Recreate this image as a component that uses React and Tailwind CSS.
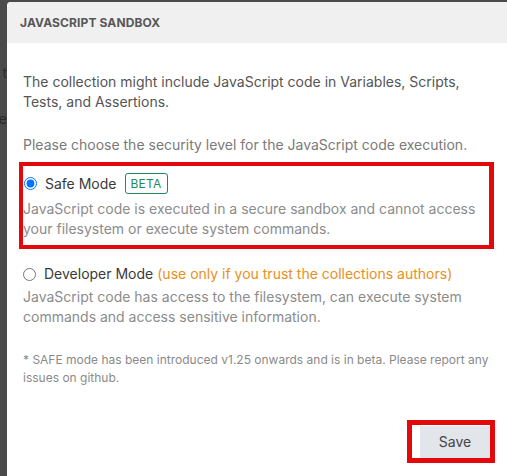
import { useState } from "react";

const FONT = { fontFamily: "Inter, 'Noto Sans', sans-serif" };

export default function App() {
  const [mode, setMode] = useState("safe");

  return (
    <div className="w-[507px] h-[476px] overflow-hidden bg-[#4a4a4a] flex" style={FONT}>
      {/* app behind the overlay, mostly hidden */}
      <div className="w-[7px] shrink-0 overflow-hidden relative text-[14px] text-[#2a2a2a]">
        <span className="absolute top-[62px] right-0">t</span>
        <span className="absolute top-[108px] right-0">e</span>
      </div>

      {/* Modal */}
      <div className="mt-[2px] w-[520px] shrink-0 bg-white rounded-tl-[4px] overflow-hidden">
        <div className="h-[41px] bg-[#f0f0f0] px-[13px] flex items-center">
          <h2 className="text-[12px] font-bold tracking-[0.01em] text-[#575757] uppercase">
            JavaScript Sandbox
          </h2>
        </div>

        <div className="px-[16px] pt-[29px] text-[14px] leading-[20px]">
          <p className="text-[#555] w-[450px]">
            The collection might include JavaScript code in Variables, Scripts, Tests, and Assertions.
          </p>
          <p className="text-[#7a7a7a] mt-[23px]">
            Please choose the security level for the JavaScript code execution.
          </p>

          {/* Safe mode (highlighted) */}
          <div className="-ml-[4px] mt-[7px] w-[475px] border-[4px] border-r-[5px] border-[#e3080c] pt-[7px] pb-[6px]">
            <label className="flex items-center h-[21px] cursor-pointer">
              <input
                type="radio"
                name="mode"
                checked={mode === "safe"}
                onChange={() => setMode("safe")}
                className="m-0 ml-[1px] w-[13px] h-[13px]"
              />
              <span className="ml-[8px] text-[#3a3a3a]">Safe Mode</span>
              <span className="ml-[8px] h-[21px] px-[5px] flex items-center border border-[#1f8a5c] rounded-[3px] text-[12px] text-[#1f8a5c] tracking-[0.02em]">
                BETA
              </span>
            </label>
            <p className="mt-[5px] text-[#8c8c8c]">
              JavaScript code is executed in a secure sandbox and cannot access your filesystem or execute system commands.
            </p>
          </div>

          {/* Developer mode */}
          <div className="mt-[15px]">
            <label className="flex items-center h-[20px] cursor-pointer">
              <input
                type="radio"
                name="mode"
                checked={mode === "dev"}
                onChange={() => setMode("dev")}
                className="m-0 w-[13px] h-[13px]"
              />
              <span className="ml-[8px] text-[#3a3a3a]">Developer Mode</span>
              <span className="ml-[4px] text-[#e8901c]">(use only if you trust the collections authors)</span>
            </label>
            <p className="mt-[3px] text-[#8c8c8c] w-[440px]">
              JavaScript code has access to the filesystem, can execute system commands and access sensitive information.
            </p>
          </div>

          <p className="mt-[24px] text-[12px] leading-[18px] text-[#8a8a8a] w-[470px]">
            * SAFE mode has been introduced v1.25 onwards and is in beta. Please report any issues on github.
          </p>

          <div className="flex mt-[33px] w-[472px] justify-end">
            <div className="border-[5px] border-[#e3080c] pl-[8px] pt-[1px]">
              <button className="w-[70px] h-[32px] bg-[#e2e5ea] text-[14px] text-[#444]">
                Save
              </button>
            </div>
          </div>
        </div>
      </div>
    </div>
  );
}
